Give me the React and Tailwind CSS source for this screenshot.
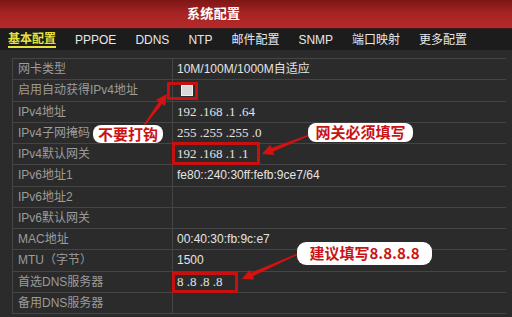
import React from "react";

const tabs = ["基本配置", "PPPOE", "DDNS", "NTP", "邮件配置", "SNMP", "端口映射", "更多配置"];

const rows = [
  { label: "网卡类型", value: "10M/100M/1000M自适应" },
  { label: "启用自动获得IPv4地址", check: true },
  { label: "IPv4地址", value: "192 .168 .1 .64", serif: true },
  { label: "IPv4子网掩码", value: "255 .255 .255 .0", serif: true },
  { label: "IPv4默认网关", value: "192 .168 .1 .1", serif: true },
  { label: "IPv6地址1", value: "fe80::240:30ff:fefb:9ce7/64" },
  { label: "IPv6地址2", value: "" },
  { label: "IPv6默认网关", value: "" },
  { label: "MAC地址", value: "00:40:30:fb:9c:e7" },
  { label: "MTU（字节）", value: "1500" },
  { label: "首选DNS服务器", value: "8 .8 .8 .8", serif: true },
  { label: "备用DNS服务器", value: "" },
];

// tapered callout arrow from tail to tip
function arrowPoints(tx, ty, hx, hy) {
  const dx = hx - tx, dy = hy - ty;
  const len = Math.hypot(dx, dy);
  const ux = dx / len, uy = dy / len;
  const nx = -uy, ny = ux;
  const headLen = 11, headW = 5.5, shaftW = 2;
  const bx = hx - ux * headLen, by = hy - uy * headLen;
  const pts = [
    [tx + nx * 0.6, ty + ny * 0.6],
    [bx + nx * shaftW, by + ny * shaftW],
    [bx + nx * headW, by + ny * headW],
    [hx, hy],
    [bx - nx * headW, by - ny * headW],
    [bx - nx * shaftW, by - ny * shaftW],
    [tx - nx * 0.6, ty - ny * 0.6],
  ];
  return pts.map((p) => p.map((v) => v.toFixed(1)).join(",")).join(" ");
}

export default function App() {
  return (
    <div className="relative w-[512px] h-[317px] overflow-hidden bg-[#2b2b2b] font-['Liberation_Sans','Noto_Sans_CJK_SC',sans-serif]">
      {/* title bar */}
      <div className="h-[28px] bg-gradient-to-b from-[#7e1616] via-[#a82424] to-[#b42a2a] flex items-center pl-[187px]">
        <span className="text-white text-[13px] font-bold tracking-wide">系统配置</span>
      </div>

      {/* tabs */}
      <div className="h-[22px] bg-[#1c1c1c] border-t border-[#3a1a1a] flex items-center pl-[8px] gap-[19px] text-[12px]">
        {tabs.map((t, i) =>
          i === 0 ? (
            <span key={t} className="text-[#e6e03c] font-bold border-b-2 border-[#e6e03c] leading-[14px]">
              {t}
            </span>
          ) : (
            <span key={t} className="text-[#e8e8e8] leading-[14px]">
              {t}
            </span>
          )
        )}
      </div>

      {/* table */}
      <div className="pt-[8px] pl-[12px] pr-[6px]">
        <div className="border-t border-l border-[#454545]">
          {rows.map((r) => (
            <div key={r.label} className="h-[21.25px] grid grid-cols-[160px_1fr] border-b border-[#454545]">
              <div className="border-r border-[#454545] pl-[5px] flex items-center text-[12px] text-[#9c9c9c]">
                {r.label}
              </div>
              <div className="pl-[4px] flex items-center text-[12px] text-[#e4e4e4]">
                {r.check ? (
                  <span className="ml-[4px] w-[12px] h-[11px] bg-[#d8d8d8] border border-[#f0f0f0]" />
                ) : (
                  <span className={r.serif ? "font-['Liberation_Serif',serif] text-[13px]" : ""}>{r.value}</span>
                )}
              </div>
            </div>
          ))}
        </div>
      </div>

      {/* red highlight boxes */}
      <div className="absolute left-[167px] top-[82px] w-[31px] h-[18px] border-[3px] border-[#c81010]" />
      <div className="absolute left-[172px] top-[142px] w-[88px] h-[23px] border-[3px] border-[#c81010]" />
      <div className="absolute left-[172px] top-[272px] w-[66px] h-[21px] border-[3px] border-[#c81010]" />

      {/* arrows */}
      <svg className="absolute inset-0 pointer-events-none" width="512" height="317" viewBox="0 0 512 317">
        <polygon points={arrowPoints(143, 127, 167, 94)} fill="#d41212" />
        <polygon points={arrowPoints(312, 134, 262, 154)} fill="#d41212" />
        <polygon points={arrowPoints(300, 253, 242, 279)} fill="#d41212" />
      </svg>

      {/* callouts */}
      <div className="absolute left-[93px] top-[125px] w-[70px] h-[18px] bg-white rounded-[8px] flex items-center justify-center text-[15px] font-bold text-[#c81414] font-['Noto_Sans_CJK_SC',sans-serif]">
        不要打钩
      </div>
      <div className="absolute left-[308px] top-[123px] w-[105px] h-[19px] bg-white rounded-[8px] flex items-center justify-center text-[15px] font-bold text-[#c81414] font-['Noto_Sans_CJK_SC',sans-serif]">
        网关必须填写
      </div>
      <div className="absolute left-[297px] top-[242px] w-[135px] h-[23px] bg-white rounded-[9px] flex items-center justify-center text-[15px] font-bold text-[#c81414] font-['Noto_Sans_CJK_SC',sans-serif]">
        建议填写8.8.8.8
      </div>
    </div>
  );
}
